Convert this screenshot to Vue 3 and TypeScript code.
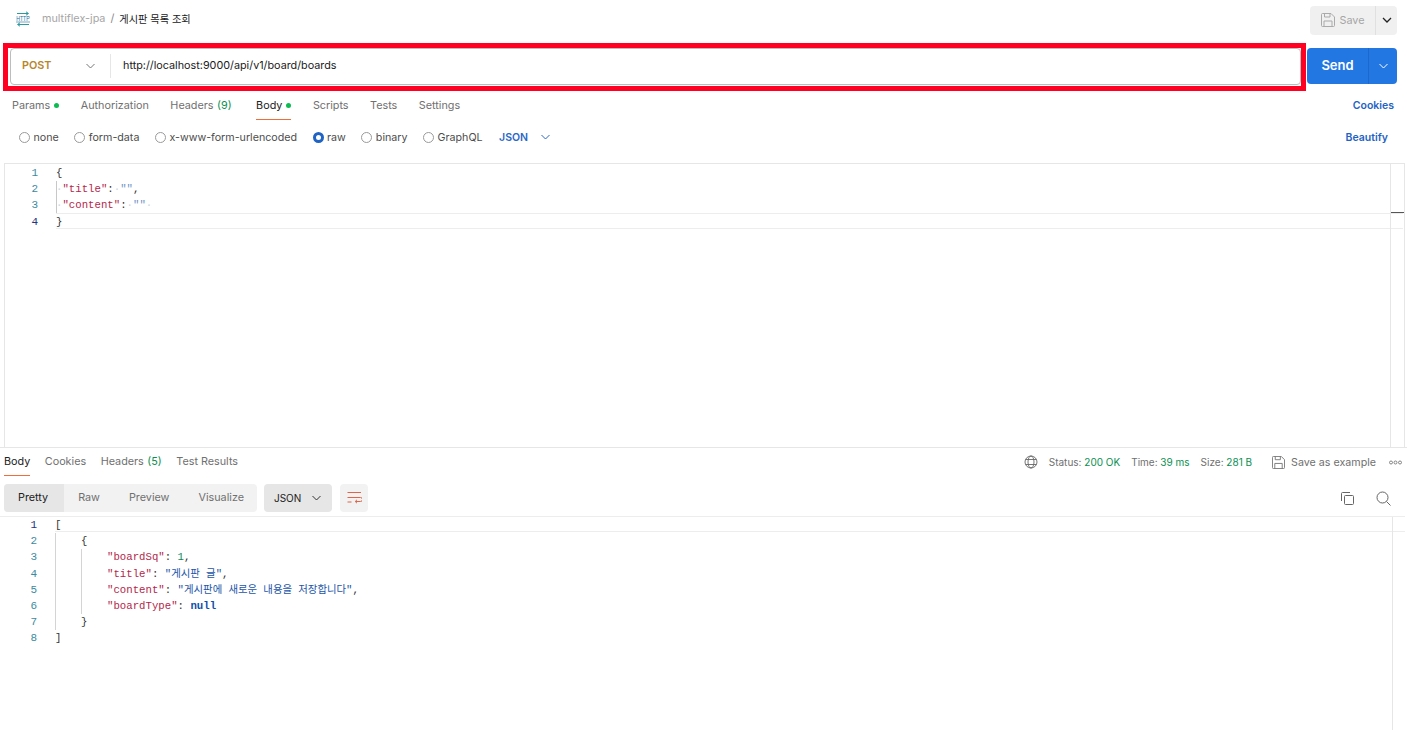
<script setup lang="ts">
const reqTabs = [
  { label: 'Params', dot: true },
  { label: 'Authorization' },
  { label: 'Headers', count: '(9)' },
  { label: 'Body', dot: true, active: true },
  { label: 'Scripts' },
  { label: 'Tests' },
  { label: 'Settings' },
]
const bodyTypes = [
  { label: 'none' },
  { label: 'form-data' },
  { label: 'x-www-form-urlencoded' },
  { label: 'raw', on: true },
  { label: 'binary' },
  { label: 'GraphQL' },
]
const resTabs = [
  { label: 'Body', active: true },
  { label: 'Cookies' },
  { label: 'Headers', count: '(5)' },
  { label: 'Test Results' },
]
const views = ['Pretty', 'Raw', 'Preview', 'Visualize']
</script>

<template>
  <div class="page">
    <header class="top">
      <svg class="http" width="16" height="16" viewBox="0 0 16 16" fill="none">
        <path d="M2 2.500h11M11 .8l2.500 1.700L11 4.200M14 13.500H3M5 11.800l-2.500 1.700L5 15.200" stroke="#2a9aa0" stroke-width="1" />
        <text x="1.200" y="7.500" transform="scale(1 1.400)" class="http-text">HTTP</text>
        <path d="M1 11h14" stroke="#1b6fa0" stroke-width=".6" />
      </svg>
      <span class="crumb">multiflex-jpa</span>
      <span class="slash">/</span>
      <span class="title">게시판 목록 조회</span>
      <div class="save">
        <span class="save-main">
          <svg width="14" height="14" viewBox="0 0 14 14" fill="none" stroke="#aaa"><path d="M.5 1.500a1 1 0 0 1 1-1h8.500l3.500 3.500v8.500a1 1 0 0 1-1 1h-11a1 1 0 0 1-1-1z" /><path d="M3.500.5v3.500h5.500V.5M3 13.500V8h8v5.500" /></svg>
          Save
        </span>
        <span class="save-arrow">
          <svg width="10" height="6" viewBox="0 0 10 6" fill="none" stroke="#222" stroke-width="1.300"><path d="M1 1l4 4 4-4" /></svg>
        </span>
      </div>
    </header>

    <div class="url-row">
      <div class="mark">
        <div class="url-box">
          <span class="method">POST</span>
          <svg class="chev" width="9" height="6" viewBox="0 0 9 6" fill="none" stroke="#777"><path d="M.5 1l4 4 4-4" /></svg>
          <span class="url">http://localhost:9000/api/v1/board/boards</span>
        </div>
      </div>
      <div class="send">
        <span class="send-main">Send</span>
        <span class="send-arrow">
          <svg width="9" height="6" viewBox="0 0 9 6" fill="none" stroke="#fff"><path d="M.5 1l4 4 4-4" /></svg>
        </span>
      </div>
    </div>

    <nav class="req-tabs">
      <span v-for="t in reqTabs" :key="t.label" class="tab" :class="{ active: t.active }">
        {{ t.label }}<span v-if="t.count" class="count">{{ t.count }}</span><i v-if="t.dot" class="dot"></i>
      </span>
      <span class="link cookies">Cookies</span>
    </nav>

    <div class="body-types">
      <label v-for="b in bodyTypes" :key="b.label" class="radio">
        <i class="circle" :class="{ on: b.on }"></i>{{ b.label }}
      </label>
      <span class="json-pick">JSON
        <svg width="9" height="6" viewBox="0 0 9 6" fill="none" stroke="#2a68c8"><path d="M.5 1l4 4 4-4" /></svg>
      </span>
      <span class="link beautify">Beautify</span>
    </div>

    <section class="editor req-editor">
      <div class="gutter">
        <span>1</span><span>2</span><span>3</span><b>4</b>
      </div>
      <div class="code">
        <div class="ln">{</div>
        <div class="ln guide"><span class="ws">·</span><span class="key">"title"</span>:<span class="ws">·</span><span class="str empty">""</span>,</div>
        <div class="ln guide"><span class="ws">·</span><span class="key">"content"</span>:<span class="ws">·</span><span class="str empty">""</span><span class="ws">·</span></div>
        <div class="ln current">}</div>
      </div>
      <div class="scroll"><i class="mini"></i></div>
    </section>

    <section class="response">
      <nav class="res-tabs">
        <span v-for="t in resTabs" :key="t.label" class="tab" :class="{ active: t.active }">
          {{ t.label }}<span v-if="t.count" class="count">{{ t.count }}</span>
        </span>
        <div class="meta">
          <svg width="14" height="14" viewBox="0 0 14 14" fill="none" stroke="#666" stroke-width=".9"><circle cx="7" cy="7" r="6" /><ellipse cx="7" cy="7" rx="3" ry="6" /><path d="M1.500 4.500h11M1.500 9.500h11" /></svg>
          <span class="stat">Status: <em>200 OK</em></span>
          <span class="stat">Time: <em>39 ms</em></span>
          <span class="stat">Size: <em>281 B</em></span>
          <span class="save-ex">
            <svg width="13" height="13" viewBox="0 0 14 14" fill="none" stroke="#777"><path d="M.5 1.500a1 1 0 0 1 1-1h8.500l3.500 3.500v8.500a1 1 0 0 1-1 1h-11a1 1 0 0 1-1-1z" /><path d="M3.500.5v3.500h5.500V.5M3 13.500V8h8v5.500" /></svg>
            Save as example
          </span>
          <svg class="more" width="13" height="5" viewBox="0 0 13 5" fill="none" stroke="#777" stroke-width=".9"><circle cx="2" cy="2.500" r="1.500" /><circle cx="6.500" cy="2.500" r="1.500" /><circle cx="11" cy="2.500" r="1.500" /></svg>
        </div>
      </nav>

      <div class="res-tools">
        <div class="views">
          <span v-for="(v, i) in views" :key="v" class="view" :class="{ sel: i === 0 }">{{ v }}</span>
        </div>
        <span class="lang">JSON
          <svg width="9" height="6" viewBox="0 0 9 6" fill="none" stroke="#333"><path d="M.5 1l4 4 4-4" /></svg>
        </span>
        <span class="wrap">
          <svg width="15" height="12" viewBox="0 0 15 12" fill="none" stroke="#e0654a"><path d="M.5 .5h13.500M.5 5.500h13a1.800 1.800 0 0 1 0 4H8.500M.5 10h4M10 7.800l-1.800 1.700L10 11.200" /></svg>
        </span>
        <div class="tool-icons">
          <svg width="13" height="13" viewBox="0 0 13 13" fill="none" stroke="#666"><path d="M.5 9V1.500a1 1 0 0 1 1-1H9" /><rect x="3.500" y="3.500" width="9" height="9" rx="1" /></svg>
          <svg width="15" height="15" viewBox="0 0 15 15" fill="none" stroke="#666"><circle cx="6.500" cy="6.500" r="5.500" /><path d="M10.500 10.500l4 4" /></svg>
        </div>
      </div>

      <div class="editor res-editor">
        <div class="gutter">
          <b>1</b><span>2</span><span>3</span><span>4</span><span>5</span><span>6</span><span>7</span><span>8</span>
        </div>
        <div class="code">
          <div class="ln current">[</div>
          <div class="ln g1">{</div>
          <div class="ln g1 g2"><span class="key">"boardSq"</span>: <span class="num">1</span>,</div>
          <div class="ln g1 g2"><span class="key">"title"</span>: <span class="str">"<span class="ko">게시판 글</span>"</span>,</div>
          <div class="ln g1 g2"><span class="key">"content"</span>: <span class="str">"<span class="ko">게시판에 새로운 내용을 저장합니다</span>"</span>,</div>
          <div class="ln g1 g2"><span class="key">"boardType"</span>: <span class="kw">null</span></div>
          <div class="ln g1">}</div>
          <div class="ln">]</div>
        </div>
        <div class="scroll res-scroll"></div>
      </div>
    </section>
  </div>
</template>

<style scoped>
.page {
  width: 1407px;
  height: 730px;
  overflow: hidden;
  background: #fff;
  font-family: Inter, "Noto Sans CJK KR", sans-serif;
  font-size: 10.800px;
  color: #707070;
  display: flex;
  flex-direction: column;
}
.top {
  height: 38px;
  flex: none;
  display: flex;
  align-items: center;
  padding-left: 15px;
}
.http { margin-right: 11px; }
.http-text {
  font-family: "Liberation Sans", sans-serif;
  font-size: 5.200px;
  fill: #1b6fa0;
}
.crumb, .slash, .title { margin-bottom: 2px; }
.crumb { color: #a6a6a6; }
.slash { color: #888; margin-left: 5px; margin-right: 6px; }
.title { color: #212121; font-size: 10.200px; margin-left: -1px; }
.save {
  margin-left: auto;
  margin-right: 10px;
  width: 87px;
  height: 29px;
  margin-top: 2px;
  display: flex;
  border-radius: 4px;
  background: #f0f0f0;
  color: #a6a6a6;
}
.save-main {
  flex: 1;
  display: flex;
  align-items: center;
  gap: 4.500px;
  padding-left: 11px;
  border-right: 1px solid #e0e0e0;
}
.save-arrow {
  width: 21px;
  display: flex;
  align-items: center;
  justify-content: center;
}
.url-row {
  flex: none;
  display: flex;
  align-items: flex-start;
  padding-left: 3px;
  margin-top: 5px;
}
.mark {
  width: 1303px;
  height: 48px;
  box-sizing: border-box;
  border: 5px solid #ff0022;
  padding: 0 0 0 2px;
  display: flex;
  align-items: flex-start;
}
.url-box {
  flex: 1;
  height: 37px;
  box-sizing: border-box;
  border: 1px solid #bdbdbd;
  border-radius: 4px;
  padding-bottom: 2px;
  display: flex;
  align-items: center;
}
.method {
  width: 75px;
  padding-left: 11px;
  box-sizing: border-box;
  color: #b6862c;
  font-weight: 600;
}
.chev { margin-right: 15px; }
.url {
  color: #212121;
  padding-left: 12px;
  border-left: 1px solid #e6e6e6;
  line-height: 24px;
}
.send {
  margin: 5px 0 0 1px;
  width: 90px;
  height: 36px;
  display: flex;
  border-radius: 4px;
  background: #2277e3;
  color: #fff;
}
.send-main {
  flex: 1;
  display: flex;
  align-items: center;
  justify-content: center;
  padding-bottom: 2px;
  box-sizing: border-box;
  font-size: 13px;
  font-weight: 600;
  border-right: 1px solid #1b69cc;
}
.send-arrow {
  width: 28px;
  display: flex;
  align-items: center;
  justify-content: center;
}
.req-tabs {
  flex: none;
  height: 29px;
  display: flex;
  align-items: center;
  gap: 21.500px;
  padding: 0 13px 0 12px;
}
.req-tabs .tab:nth-child(4) { margin-left: 3px; }
.tab {
  position: relative;
  line-height: 29px;
  white-space: nowrap;
}
.tab.active { color: #212121; }
.tab.active::after {
  content: "";
  position: absolute;
  left: 0;
  right: 0;
  bottom: 0;
  height: 1px;
  background: #f26b3a;
}
.count { color: #0a8f50; margin-left: 3.500px; }
.dot {
  display: inline-block;
  width: 5px;
  height: 5px;
  margin-left: 4px;
  border-radius: 50%;
  background: #0cbb52;
  vertical-align: 1px;
}
.link { color: #1f63c4; font-weight: 600; margin-left: auto; font-size: 10.500px; }
.body-types {
  flex: none;
  height: 34px;
  display: flex;
  align-items: center;
  padding: 0 19px 0 19px;
  gap: 15.500px;
  color: #4d4d4d;
  font-size: 10.700px;
}
.radio {
  display: flex;
  align-items: center;
  gap: 3.500px;
}
.circle {
  width: 11px;
  height: 11px;
  box-sizing: border-box;
  border: 1px solid #9a9a9a;
  border-radius: 50%;
}
.circle.on { border: 3px solid #1f63c4; }
.json-pick {
  display: flex;
  align-items: center;
  gap: 13px;
  color: #2a68c8;
  font-weight: 600;
  font-size: 10.500px;
  margin-left: 1px;
}
.editor {
  display: flex;
  position: relative;
  font-family: "Liberation Mono", "Noto Sans CJK KR", monospace;
  color: #333;
}
.req-editor {
  flex: none;
  height: 284px;
  margin: 9px 2px 0 4px;
  border-top: 1px solid #e6e6e6;
  border-left: 1px solid #e6e6e6;
  border-right: 1px solid #e6e6e6;
  box-sizing: border-box;
}
.gutter {
  width: 51px;
  flex: none;
  display: flex;
  flex-direction: column;
  align-items: flex-end;
  padding: 0 18px 0 0;
  box-sizing: border-box;
  font-size: 11px;
  line-height: 16.200px;
  color: #3b8aa0;
}
.gutter b { font-weight: 400; color: #28357e; }
.req-editor .gutter { padding-top: 1px; }
.req-editor .code { padding-top: 1px; }
.code {
  flex: 1;
  min-width: 0;
  font-size: 10.700px;
  line-height: 16.200px;
}
.ln {
  height: 16.200px;
  white-space: pre;
  color: #333;
  position: relative;
}
.ln.current {
  height: 14px;
  margin-bottom: 2.200px;
  margin-right: -13px;
  box-shadow: 0 -1px 0 #ededed, 0 1px 0 #ededed;
}
.ln.guide {
  box-shadow: inset 1px 0 0 #c8c8c8;
}
.ws { color: #cdd6e0; }
.key { color: #b3264a; }
.str { color: #1c55a8; }
.str.empty { color: #6f93c8; }
.ko { font-size: 10.400px; }
.num { color: #0c8a5a; }
.kw { color: #0d4fa8; font-weight: 700; }
.scroll {
  width: 13px;
  flex: none;
  border-left: 1px solid #e6e6e6;
  position: relative;
}
.mini {
  position: absolute;
  left: 0;
  right: 0;
  top: 48px;
  height: 1px;
  background: #555;
}
.response {
  flex: 1;
  min-height: 0;
  border-top: 1px solid #e6e6e6;
  display: flex;
  flex-direction: column;
}
.res-tabs {
  flex: none;
  height: 28px;
  box-sizing: border-box;
  padding: 0 5px 0 4px;
  display: flex;
  align-items: center;
  gap: 14.500px;
}
.res-tabs .tab { line-height: 28px; }
.meta {
  margin-left: auto;
  display: flex;
  align-items: center;
  gap: 11px;
  color: #707070;
}
.meta .more { margin-left: 2px; }
.stat { font-size: 10px; }
.stat em { font-style: normal; color: #0a8f50; }
.save-ex {
  display: flex;
  align-items: center;
  gap: 6px;
  margin-left: 9px;
  font-size: 10.700px;
}
.res-tools {
  flex: none;
  height: 40px;
  box-sizing: border-box;
  padding: 4px 16px 0 4px;
  display: flex;
  align-items: center;
}
.views {
  width: 253px;
  height: 28px;
  display: flex;
  align-items: center;
  background: #f2f2f2;
  border-radius: 4px;
  overflow: hidden;
}
.view { padding: 0 15px 0 14px; line-height: 28px; }
.view.sel { background: #e6e6e6; color: #212121; padding-right: 16px; }
.lang {
  margin-left: 7px;
  width: 68px;
  height: 28px;
  box-sizing: border-box;
  background: #e6e6e6;
  border-radius: 4px;
  color: #212121;
  display: flex;
  align-items: center;
  justify-content: space-between;
  padding: 0 11px 0 10px;
  font-size: 10px;
}
.wrap {
  margin-left: 8px;
  width: 28px;
  height: 28px;
  background: #f2f2f2;
  border-radius: 4px;
  display: flex;
  align-items: center;
  justify-content: center;
}
.tool-icons {
  margin-left: auto;
  display: flex;
  align-items: center;
  gap: 22px;
}
.res-editor {
  flex: 1;
  min-height: 0;
  padding-left: 4px;
  margin-right: 2px;
  border-top: 1px solid #ededed;
}
.res-editor .gutter { padding-right: 18px; margin-left: -4px; width: 55px; }
.g1::before, .g2::after {
  content: "";
  position: absolute;
  top: 0;
  bottom: 0;
  width: 1px;
  background: #d4d4d4;
}
.g1::before { left: 0; }
.g2::after { left: 26px; }
.ln.g1 { padding-left: 26px; }
.ln.g2 { padding-left: 52px; }
.res-scroll { width: 12px; }
</style>

<style>
html, body { margin: 0; background: #fff; }
</style>
